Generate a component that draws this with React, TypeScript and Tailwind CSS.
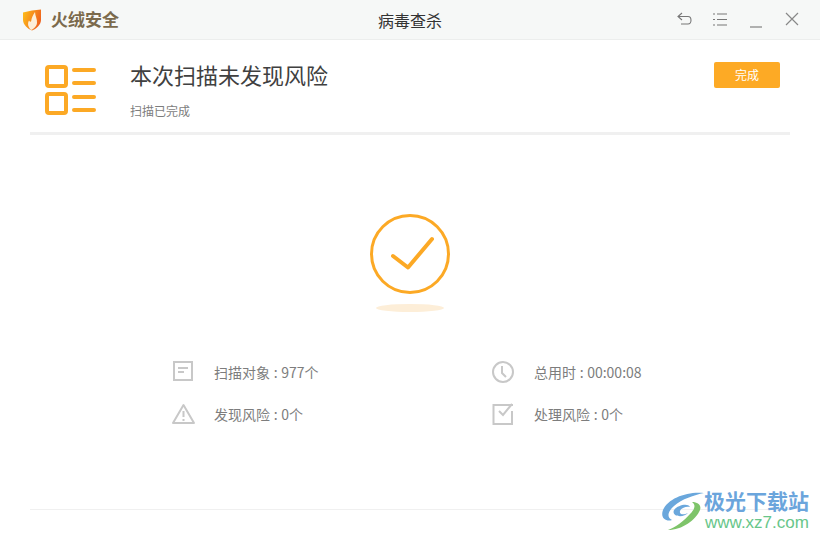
import React from "react";

const font = { fontFamily: '"Noto Sans CJK SC", "Noto Sans", sans-serif' };

function Logo() {
  return (
    <svg width="20" height="22" viewBox="0 0 20 22">
      <defs>
        <linearGradient id="lg" x1="0" y1="0.2" x2="1" y2="0.6">
          <stop offset="0" stopColor="#fdbb1a" />
          <stop offset="1" stopColor="#ee5f1e" />
        </linearGradient>
      </defs>
      <path d="M1 3.5 L10 1.5 L19 0.5 V11 C19 16 14 20 10 21.5 C6 20 1 16 1 11 Z" fill="url(#lg)" />
      <path d="M13 3 C13 7 15.5 10 15 14 C14.5 18 11 20.5 9 21 C6.5 18.5 5 15 7 11.5 C8 13 9 13 9.2 12 C9.5 9 11 6 13 3 Z" fill="#fdeed8" />
    </svg>
  );
}

function StatIcon({ kind }: { kind: string }) {
  const c = "#c8c8c8";
  if (kind === "doc")
    return (
      <svg width="24" height="24" viewBox="0 0 24 24" fill="none" stroke={c} strokeWidth="2">
        <rect x="2" y="2" width="18" height="18" />
        <path d="M6 8 H16 M6 12 H12" />
      </svg>
    );
  if (kind === "warn")
    return (
      <svg width="24" height="24" viewBox="0 0 24 24" fill="none" stroke={c} strokeWidth="2" strokeLinejoin="round">
        <path d="M11.5 3 L22 21 H1 Z" />
        <path d="M11.5 9 V15 M11.5 17 V19" />
      </svg>
    );
  if (kind === "clock")
    return (
      <svg width="24" height="24" viewBox="0 0 24 24" fill="none" stroke={c} strokeWidth="2">
        <circle cx="11" cy="12" r="10" />
        <path d="M10 6 V13 L14 17" />
      </svg>
    );
  return (
    <svg width="24" height="24" viewBox="0 0 24 24" fill="none" stroke={c} strokeWidth="2">
      <path d="M20 4 V3 H1.5 V22 H20 V9" />
      <path d="M7 9 L11 13 L20 2" />
    </svg>
  );
}

function Stat({ kind, text, width }: { kind: string; text: string; width: string }) {
  return (
    <div className={`flex h-[24px] items-center ${width}`}>
      <div className="w-[42px] shrink-0">
        <StatIcon kind={kind} />
      </div>
      <span className="text-[14px] leading-[24px] text-[#7d7d7d] whitespace-nowrap [word-spacing:0.5px]">{text}</span>
    </div>
  );
}

function Watermark() {
  return (
    <div className="absolute left-[660px] top-[488px] h-[44px] w-[156px]">
      <svg className="absolute left-0 top-[2px]" width="50" height="42" viewBox="0 0 50 42" fill="none">
        <path d="M44 3 C28 1 8 8 3 20 C0 28 6 32 12 30 C7 28 7 22 14 16 C22 9 34 5 44 3 Z" fill="#6aa7dc" />
        <path d="M8 40 C22 40 36 30 40 20 C42 14 36 12 32 12 C36 15 35 19 30 24 C24 31 16 37 8 40 Z" fill="#7ec46a" />
        <path d="M14 20 C18 15 28 13 30 17 C26 16 21 18 20 21 C19 25 24 25 28 23 C24 28 11 27 14 20 Z" fill="#6aa7dc" />
      </svg>
      <div className="absolute left-[44px] top-0 text-[21px] leading-[24px] font-bold text-[#6ba5dc] whitespace-nowrap">极光下载站</div>
      <div className="absolute left-[45px] top-[26px] text-[17px] leading-[18px] font-medium text-[#68c68a] whitespace-nowrap" style={{ fontFamily: '"Liberation Sans", sans-serif' }}>www.xz7.com</div>
    </div>
  );
}

export default function App() {
  return (
    <div className="relative flex h-[540px] w-[820px] flex-col overflow-hidden bg-white" style={font}>
      <div className="flex h-[40px] shrink-0 items-center border-b border-[#eceeed] bg-[#f6f8f7]">
        <div className="flex w-[190px] items-center pl-[22px]">
          <Logo />
          <span className="ml-[9px] text-[17px] font-bold leading-[22px] text-[#7b6a4c] -translate-y-px">火绒安全</span>
        </div>
        <div className="flex-1 text-center text-[16px] text-[#333333]">病毒查杀</div>
        <div className="flex w-[190px] items-center justify-end gap-[19px] pr-[19px]">
          <svg width="17" height="17" viewBox="0 0 17 17" fill="none" stroke="#777" strokeWidth="1.1">
            <path d="M6 2 L2 5.5 L6 9 M2 5.5 H12 C16 5.5 16 13 12 13 H5" />
          </svg>
          <svg width="17" height="17" viewBox="0 0 17 17" fill="none" stroke="#777" strokeWidth="1.1">
            <path d="M1 3 H3 M5 3 H15 M1 8.5 H3 M5 8.5 H15 M1 14 H3 M5 14 H15" />
          </svg>
          <svg width="17" height="17" viewBox="0 0 17 17" fill="none" stroke="#777" strokeWidth="1.1">
            <path d="M2 16 H14" />
          </svg>
          <svg width="17" height="17" viewBox="0 0 17 17" fill="none" stroke="#888" strokeWidth="1.2">
            <path d="M2 2 L14 14 M14 2 L2 14" />
          </svg>
        </div>
      </div>

      <div className="mx-[30px] flex h-[95px] shrink-0 border-b-[3px] border-[#f0f0f0]">
        <div className="ml-[15px] mt-[25px] h-[52px] w-[52px]">
          <svg width="52" height="52" viewBox="0 0 52 52" fill="none" stroke="#fca925" strokeWidth="4" strokeLinecap="round">
            <rect x="2" y="2" width="19" height="19" rx="2" />
            <rect x="2" y="29" width="19" height="19" rx="2" />
            <path d="M29 5 H49 M29 18 H49 M29 32 H49 M29 45 H49" />
          </svg>
        </div>
        <div className="ml-[33px] flex flex-col">
          <div className="mt-[16px] text-[22px] leading-[36px] text-[#404040]">本次扫描未发现风险</div>
          <div className="mt-[10px] text-[12px] leading-[18px] text-[#7d7d7d]">扫描已完成</div>
        </div>
        <div className="ml-auto mr-[10px] mt-[22px] flex h-[26px] w-[66px] items-center justify-center rounded-[2px] bg-[#fdaa25] text-[12px] text-white">完成</div>
      </div>

      <div className="mt-[79px] flex flex-col items-center">
        <svg width="80" height="80" viewBox="0 0 80 80" fill="none" stroke="#fca925">
          <circle cx="40" cy="40" r="38.5" strokeWidth="3" />
          <path d="M23 42 L38 53.5 L62 25" strokeWidth="4" strokeLinecap="round" strokeLinejoin="round" />
        </svg>
        <div className="mt-[10px] h-[8px] w-[68px] rounded-[50%] bg-[#fdeed8]" />
      </div>

      <div className="ml-[172px] mt-[48px] grid w-[500px] grid-cols-[320px_180px] gap-y-[18px]">
        <Stat kind="doc" text="扫描对象 : 977个" width="w-[320px]" />
        <Stat kind="clock" text="总用时 : 00:00:08" width="w-[180px]" />
        <Stat kind="warn" text="发现风险 : 0个" width="w-[320px]" />
        <Stat kind="check" text="处理风险 : 0个" width="w-[180px]" />
      </div>

      <div className="mx-[30px] mt-[83px] border-t border-[#f0f0f0]" />
      <Watermark />
    </div>
  );
}
